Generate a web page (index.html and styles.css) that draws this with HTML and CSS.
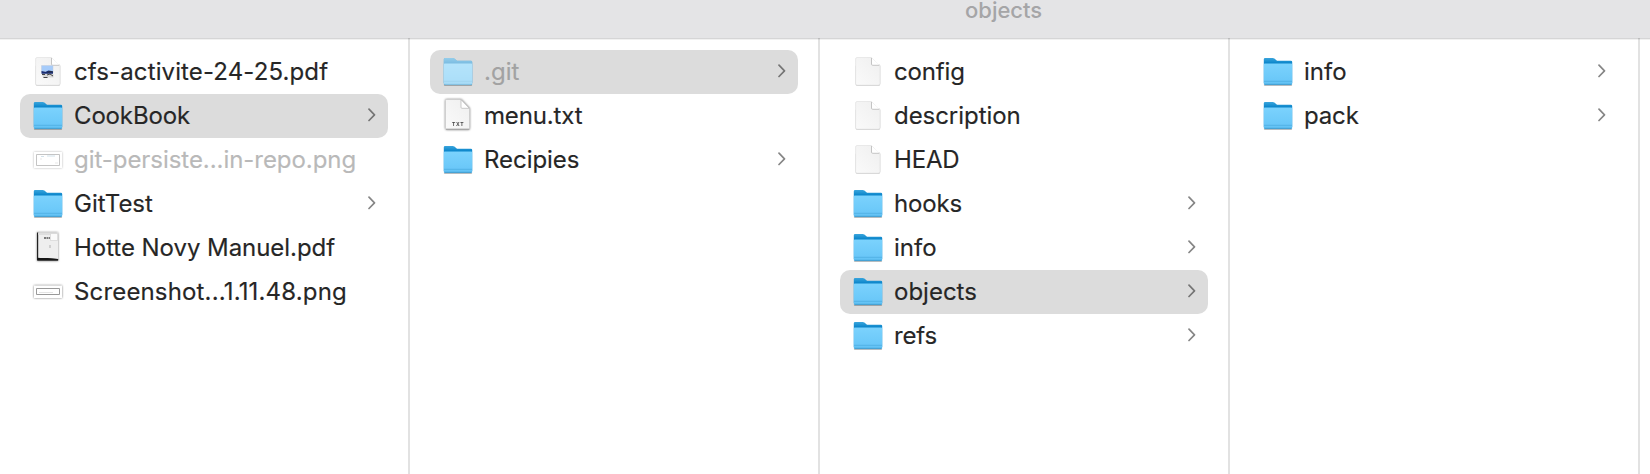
FILE: index.html
```
<!DOCTYPE html>
<html lang="en">
<head>
<meta charset="utf-8">
<title>objects</title>
<link rel="stylesheet" href="styles.css">
</head>
<body>
<svg class="defs" width="0" height="0" aria-hidden="true">
  <defs>
    <linearGradient id="front" x1="0" y1="0" x2="0" y2="1"><stop offset="0" stop-color="#7bd2fd"/><stop offset="1" stop-color="#66c5f7"/></linearGradient>
    <linearGradient id="back" x1="0" y1="0" x2="0" y2="1"><stop offset="0" stop-color="#3aa5dc"/><stop offset=".2" stop-color="#0883c9"/></linearGradient>
    <linearGradient id="paper" x1="1" y1="0" x2="0" y2="1"><stop offset="0" stop-color="#efefef"/><stop offset="1" stop-color="#fafafa"/></linearGradient>
    <symbol id="folder" viewBox="0 0 32 44">
      <path d="M1.800 34.500h28.400v.6q0 1-1.200 1H3q-1.200 0-1.200-1z" fill="#000" opacity=".25"/>
      <path d="M1.800 9.300Q1.800 8 3.100 8h7.600q1 0 1.700.6l2 1.700q.6.5 1.500.5h13q1.300 0 1.300 1.300V33q0 1.800-1.800 1.800H3.600Q1.800 34.800 1.800 33z" fill="url(#back)"/>
      <path d="M1.800 14.500q0-1 1-1h26.400q1 0 1 1V33.200q0 1.600-1.600 1.600H3.400q-1.600 0-1.600-1.600z" fill="url(#front)"/>
      <path d="M2 32.800h28v.6q0 1.300-1.400 1.300H3.400Q2 34.700 2 33.400z" fill="#5bbbee"/>
      <path d="M2 31.300h28" stroke="#4cacdf" stroke-width=".8"/>
      <path d="M2.600 34.600h26.800" stroke="#3c93c4" stroke-width=".7"/>
    </symbol>
    <symbol id="doc" viewBox="0 0 32 44">
      <path d="M5 14.500h22q1.300 0 1.300 1.300V34q0 2-2 2H5.500q-2 0-2-2V16z" fill="#000" opacity=".2"/>
      <path d="M5 7.500h14.500l8.500 8.500v17.500q0 1.700-1.700 1.700H5.300q-1.700 0-1.700-1.700V9q0-1.500 1.400-1.500z" fill="url(#paper)" stroke="#dedede" stroke-width=".6"/>
      <path d="M19.500 7.700v6.500q0 1.400 1.400 1.400h7z" fill="#fff"/>
      <path d="M19.500 8v6.200q0 1.100 1.200 1.100h6.500" fill="none" stroke="#bdbdbd" stroke-width=".9"/>
    </symbol>
    <symbol id="chevron" viewBox="0 0 8 14"><path d="M1 1.200 6.500 6.800 1 12.500" fill="none" stroke="currentColor" stroke-width="1.700" stroke-linecap="round" stroke-linejoin="round"/></symbol>
  </defs>
</svg>
<div class="window">
  <header class="titlebar"><h1 class="title">objects</h1></header>
  <main class="columns">
    <ul class="column">
      <li class="row"><svg class="icon" viewBox="0 0 32 44"><use href="#doc"/><path d="M9.500 15.500h11.500v6h-11.500z" fill="#a5cbfa"/><path d="M9.500 15.500h11.500v7.500h-11.500z" fill="none" stroke="#c3cbd8" stroke-width=".5"/><path d="M9.500 21l4 .8 3-1.300 4.500.7v2.500h-11.500z" fill="#182d74"/><path d="M10 24h11.500v3.500H11z" fill="#d7d7d7"/><path d="M15.500 23l2-1.500 3 .5M10 24.500h3M15 25l3-1 3 2M11.500 27.500h4" fill="none" stroke="#333" stroke-width=".9"/></svg><span class="name wider">cfs-activite-24-25.pdf</span></li>
      <li class="row selected"><svg class="icon"><use href="#folder"/></svg><span class="name tight">CookBook</span><svg class="chevron"><use href="#chevron"/></svg></li>
      <li class="row"><svg class="icon faded shot" viewBox="0 0 32 44"><path d="M2 14h28v16H2z" fill="#fff"/><path d="M4.500 16.500h23v11h-23z" fill="#fff" stroke="#888" stroke-width=".9"/><path d="M9 18.500h3M15 18h8" stroke="#9bbbd1" stroke-width=".8"/><path d="M8 21h2M23 25h3" stroke="#ccc" stroke-width=".8"/></svg><span class="name dim snug">git-persiste...in-repo.png</span></li>
      <li class="row"><svg class="icon"><use href="#folder"/></svg><span class="name">GitTest</span><svg class="chevron"><use href="#chevron"/></svg></li>
      <li class="row"><svg class="icon shot" viewBox="0 0 32 44"><path d="M5 6.500h21v28H5z" fill="#eee"/><path d="M5 6.500h1.200v25.300l2 .3 18 .9v1.500H5z" fill="#222"/><path d="M5.500 32h10l10.500 1v1.500H5.500z" fill="#161616"/><path d="M6.200 7h19.500v2H6.200z" fill="#dedede"/><path d="M12 12h6" stroke="#555" stroke-width="1.500" stroke-dasharray="2 .5"/><path d="M18.500 7.500h7v7h-7z" fill="#fafafa" stroke="#cfcfcf" stroke-width=".6"/><path d="M18 19v3" stroke="#bbb" stroke-width="1.200"/></svg><span class="name snug">Hotte Novy Manuel.pdf</span></li>
      <li class="row"><svg class="icon shot" viewBox="0 0 32 44"><path d="M2 15.500h28V28H2z" fill="#fff"/><path d="M4.500 18.500h23v6h-23z" fill="#fff" stroke="#8d8d8d" stroke-width=".9"/><path d="M7 22.500h14" stroke="#ddd" stroke-width=".8"/></svg><span class="name widest">Screenshot...1.11.48.png</span></li>
    </ul>
    <ul class="column">
      <li class="row selected"><svg class="icon"><use href="#folder"/><path d="M1.800 9.300Q1.800 8 3.100 8h7.600q1 0 1.700.6l2 1.700q.6.5 1.500.5h13q1.300 0 1.300 1.300V33q0 1.800-1.800 1.800H3.600Q1.800 34.800 1.800 33z" fill="#eef6fa" opacity=".5"/></svg><span class="name dim">.git</span><svg class="chevron"><use href="#chevron"/></svg></li>
      <li class="row"><svg class="icon shot" viewBox="0 0 32 44"><path d="M4.500 5.500h14.700l8.300 9v19.700q0 1-1 1h-22q-1 0-1-1V6.500q0-1 1-1z" fill="url(#paper)" stroke="#ccc" stroke-width=".5"/><path d="M4 35.200h23.300" stroke="#888" stroke-width=".7"/><path d="M19 5.700v7.600q0 1 1 1h7.300z" fill="#fff" stroke="#aaa" stroke-width=".6"/><text class="badge" x="10" y="31.800" textLength="11.500">TXT</text></svg><span class="name tight">menu.txt</span></li>
      <li class="row"><svg class="icon"><use href="#folder"/></svg><span class="name snug">Recipies</span><svg class="chevron"><use href="#chevron"/></svg></li>
    </ul>
    <ul class="column">
      <li class="row"><svg class="icon"><use href="#doc"/></svg><span class="name tight">config</span></li>
      <li class="row"><svg class="icon"><use href="#doc"/></svg><span class="name snug">description</span></li>
      <li class="row"><svg class="icon"><use href="#doc"/></svg><span class="name tight">HEAD</span></li>
      <li class="row"><svg class="icon"><use href="#folder"/></svg><span class="name tight">hooks</span><svg class="chevron"><use href="#chevron"/></svg></li>
      <li class="row"><svg class="icon"><use href="#folder"/></svg><span class="name">info</span><svg class="chevron"><use href="#chevron"/></svg></li>
      <li class="row selected"><svg class="icon"><use href="#folder"/></svg><span class="name">objects</span><svg class="chevron"><use href="#chevron"/></svg></li>
      <li class="row"><svg class="icon"><use href="#folder"/></svg><span class="name tight">refs</span><svg class="chevron"><use href="#chevron"/></svg></li>
    </ul>
    <ul class="column">
      <li class="row"><svg class="icon"><use href="#folder"/></svg><span class="name">info</span><svg class="chevron"><use href="#chevron"/></svg></li>
      <li class="row"><svg class="icon"><use href="#folder"/></svg><span class="name tight">pack</span><svg class="chevron"><use href="#chevron"/></svg></li>
    </ul>
  </main>
</div>
</body>
</html>
```
FILE: styles.css
```
body {
  margin: 0;
  background: #fff;
  font-family: Inter, "Liberation Sans", sans-serif;
}
.defs { display: block; }
.window {
  display: flex;
  flex-direction: column;
  height: 474px;
  overflow: hidden;
}
.titlebar {
  box-sizing: border-box;
  height: 40px;
  flex: none;
  background: linear-gradient(#e4e4e6 38px, #d5d5d6 38px, #d5d5d6 39px, #f1f1f1 39px);
  padding-left: 965px;
}
.title {
  margin: 0;
  font-size: 22px;
  font-weight: 500;
  line-height: 20px;
  color: #a5a5a7;
}
.columns { display: flex; flex: 1; margin-top: -2px; }
.column {
  box-sizing: border-box;
  flex: none;
  width: 410px;
  margin: 0;
  padding: 12px 20px 0;
  list-style: none;
  border-right: 2px solid rgba(0, 0, 0, .115);
}
.row {
  display: flex;
  align-items: center;
  box-sizing: border-box;
  height: 44px;
  padding: 0 12px;
  border-radius: 10px;
  color: #868686;
}
.selected { background: #dcdcdc; color: #757575; }
.icon { width: 32px; height: 44px; flex: none; overflow: visible; }
.faded { opacity: .55; }
.shot { filter: drop-shadow(0 .7px 1px rgba(0, 0, 0, .55)); }
.badge { font-size: 5px; font-weight: 700; fill: #444; }
.name {
  flex: 1;
  margin-left: 10px;
  font-size: 24px;
  line-height: 44px;
  white-space: nowrap;
  color: #262626;
  -webkit-text-stroke: .15px currentColor;
}
.tight { letter-spacing: -.15px; }
.snug { letter-spacing: -.05px; }
.wider { letter-spacing: .12px; }
.widest { letter-spacing: .16px; }
.dim { color: #b9b9b9; }
.selected .dim { color: #a2a2a2; }
.chevron { width: 8px; height: 14px; flex: none; margin-top: -2px; }
```
